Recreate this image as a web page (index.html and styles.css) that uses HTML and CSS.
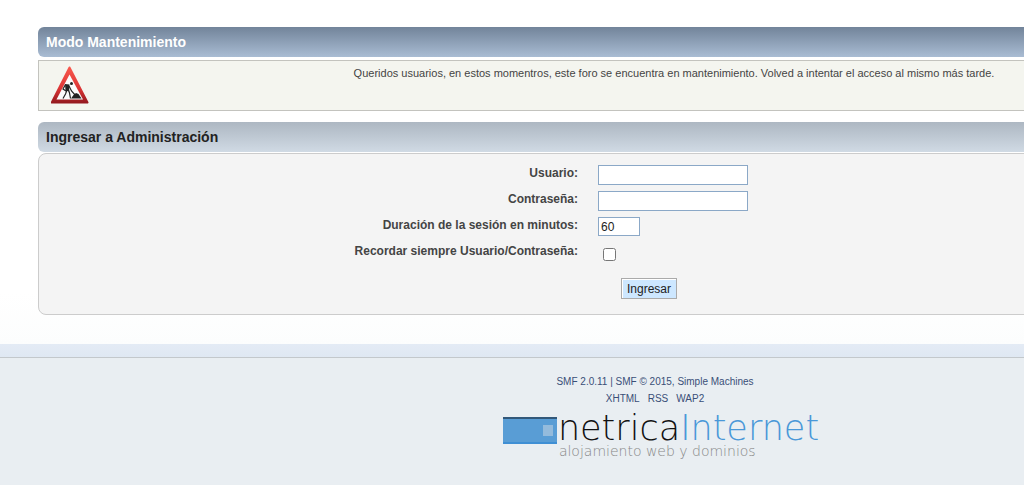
FILE: index.html
```html
<!DOCTYPE html>
<html lang="es">
<head>
<meta charset="utf-8">
<title>Modo Mantenimiento</title>
<link rel="stylesheet" href="styles.css">
</head>
<body>
<main class="content">
  <h3 class="bar bar-category">Modo Mantenimiento</h3>
  <div class="notice">
    <svg class="notice-icon" viewBox="0 0 38 38" aria-hidden="true">
      <defs>
        <linearGradient id="sign" x1="0" y1="0" x2="0" y2="1">
          <stop offset="0" stop-color="#f8574c"/>
          <stop offset=".6" stop-color="#dc3535"/>
          <stop offset="1" stop-color="#961a20"/>
        </linearGradient>
      </defs>
      <path d="M18.500 1.500 36.500 36.500H.8Z" fill="url(#sign)" stroke="url(#sign)" stroke-width="2" stroke-linejoin="round"/>
      <path d="M18.500 8.500 32 33.500H5.500Z" fill="#fbfbfb"/>
      <circle cx="20.500" cy="17.500" r="1.500" fill="#222"/>
      <path d="M17.500 24 18.500 27 19.500 32.500M16 24 14.500 28 12 32.500M14.500 18.500 12 23 15 25M18 20 20.500 25 25 30" fill="none" stroke="#222" stroke-width="1.200"/>
      <path d="M14 18 18.500 18.500 18 25.500 14.500 24.500Z" fill="#222"/>
      <path d="M20 32.500 22.500 29 25 27 27.500 28 30.500 32.500Z" fill="#222"/>
    </svg>
    <p class="notice-text">Queridos usuarios, en estos momentros, este foro se encuentra en mantenimiento. Volved a intentar el acceso al mismo más tarde.</p>
  </div>
  <h3 class="bar bar-title">Ingresar a Administración</h3>
  <form class="panel">
    <div class="fields">
      <label for="user">Usuario:</label>
      <input class="field" type="text" id="user">
      <label for="pass">Contraseña:</label>
      <input class="field" type="password" id="pass">
      <label for="length">Duración de la sesión en minutos:</label>
      <input class="field field-short" type="text" id="length" value="60">
      <label for="always">Recordar siempre Usuario/Contraseña:</label>
      <input class="check" type="checkbox" id="always">
    </div>
    <button class="submit" type="submit">Ingresar</button>
  </form>
</main>
<footer class="footer">
  <p class="footer-line"><a href="#">SMF 2.0.11</a> | <a href="#">SMF © 2015</a>, <a href="#">Simple Machines</a></p>
  <ul class="footer-links">
    <li><a href="#">XHTML</a></li>
    <li><a href="#">RSS</a></li>
    <li><a href="#">WAP2</a></li>
  </ul>
  <a class="logo" href="#">
    <svg class="logo-mark" viewBox="0 0 54 27" aria-hidden="true">
      <path d="M0 0H54V27H0Z" fill="#599dd5"/>
      <path d="M0 0H54V2H0Z" fill="#32587a"/>
      <path d="M0 25H54V27H0Z" fill="#3f8fd4"/>
      <path d="M40 8H50V19H40Z" fill="#94bbdc"/>
    </svg>
    <span class="logo-words">
      <span class="logo-name">netrica<span class="logo-accent">Internet</span></span>
      <span class="logo-tag">alojamiento web y dominios</span>
    </span>
  </a>
</footer>
</body>
</html>
```
FILE: styles.css
```css
* { box-sizing: border-box; }

html {
  min-height: 100%;
  overflow: hidden;
  background: #e9eef2;
}

body {
  min-width: 1310px;
  margin: 0;
  color: #444;
  font: 12px/18px "Liberation Sans", Arial, sans-serif;
}

a {
  color: #3a4f78;
  text-decoration: none;
}

.content {
  padding: 27px 38px 29px;
  background: linear-gradient(#fff 85%, #fcfdfd);
}

.bar {
  height: 30px;
  margin: 0;
  padding: 0 8px;
  border-radius: 6px;
  font-size: 14px;
  line-height: 30px;
}

.bar-category {
  background: linear-gradient(#72849a, #a9bcd3);
  color: #fff;
}

.bar-title {
  margin-top: 11px;
  background: linear-gradient(#adb7c2, #d0dae4);
  color: #222;
}

.notice {
  display: flex;
  align-items: flex-start;
  min-height: 51px;
  margin-top: 3px;
  padding: 5px 12px;
  border: 1px solid #c3c3be;
  background: #f4f5ef;
}

.notice-icon {
  width: 38px;
  height: 38px;
}

.notice-text {
  flex: 1;
  margin: 0;
  font-size: 11px;
  line-height: 15px;
  text-align: center;
}

.panel {
  display: flex;
  flex-direction: column;
  align-items: center;
  margin-top: 1px;
  padding: 11px 10px 15px;
  border: 1px solid #ccc;
  border-radius: 8px;
  background: #f4f4f4;
}

.fields {
  display: grid;
  grid-template-columns: 1fr 1fr;
  grid-auto-rows: 20px;
  gap: 6px 20px;
  width: 100%;
  padding-right: 134px;
}

.fields label {
  font-weight: bold;
  line-height: 16px;
  text-align: right;
}

.field {
  width: 150px;
  height: 20px;
  padding: 0 2px;
  border: 1px solid #8ba8c7;
  background: #fff;
  color: #222;
  font: 12px "Liberation Sans", Arial, sans-serif;
}

.field-short {
  width: 42px;
  height: 19px;
}

.check {
  width: 13px;
  height: 13px;
  margin: 5px;
}

.submit {
  height: 21px;
  margin: 15px 12px 0 0;
  padding: 0 5px;
  border: 1px solid #aaa;
  background: #cde7ff;
  box-shadow: inset 1px 1px #fff;
  color: #222;
  font: 12px "Liberation Sans", Arial, sans-serif;
}

.footer {
  display: flex;
  flex-direction: column;
  align-items: center;
  padding: 29px 0 24px;
  background: linear-gradient(#e4ebf5, #dfe8f3 13px, #c3c8cc 13px, #c3c8cc 14px, #e9eef2 14px);
  color: #3a4f78;
  font-size: 10px;
  line-height: 17px;
}

.footer-line {
  margin: 0;
}

.footer-links {
  display: flex;
  gap: 8px;
  margin: 0;
  padding: 0;
  list-style: none;
}

.logo {
  display: flex;
  gap: 1px;
  margin: 6px 0 0 12px;
}

.logo-mark {
  width: 54px;
  height: 27px;
  margin-top: 4px;
}

.logo-words {
  display: flex;
  flex-direction: column;
  font-family: "DejaVu Sans", sans-serif;
  font-weight: 200;
}

.logo-name {
  color: #111;
  font-size: 35px;
  line-height: 30px;
}

.logo-accent {
  color: #4a98d8;
}

.logo-tag {
  padding-left: 1px;
  color: #888;
  font-size: 14px;
  line-height: 16px;
}
```
